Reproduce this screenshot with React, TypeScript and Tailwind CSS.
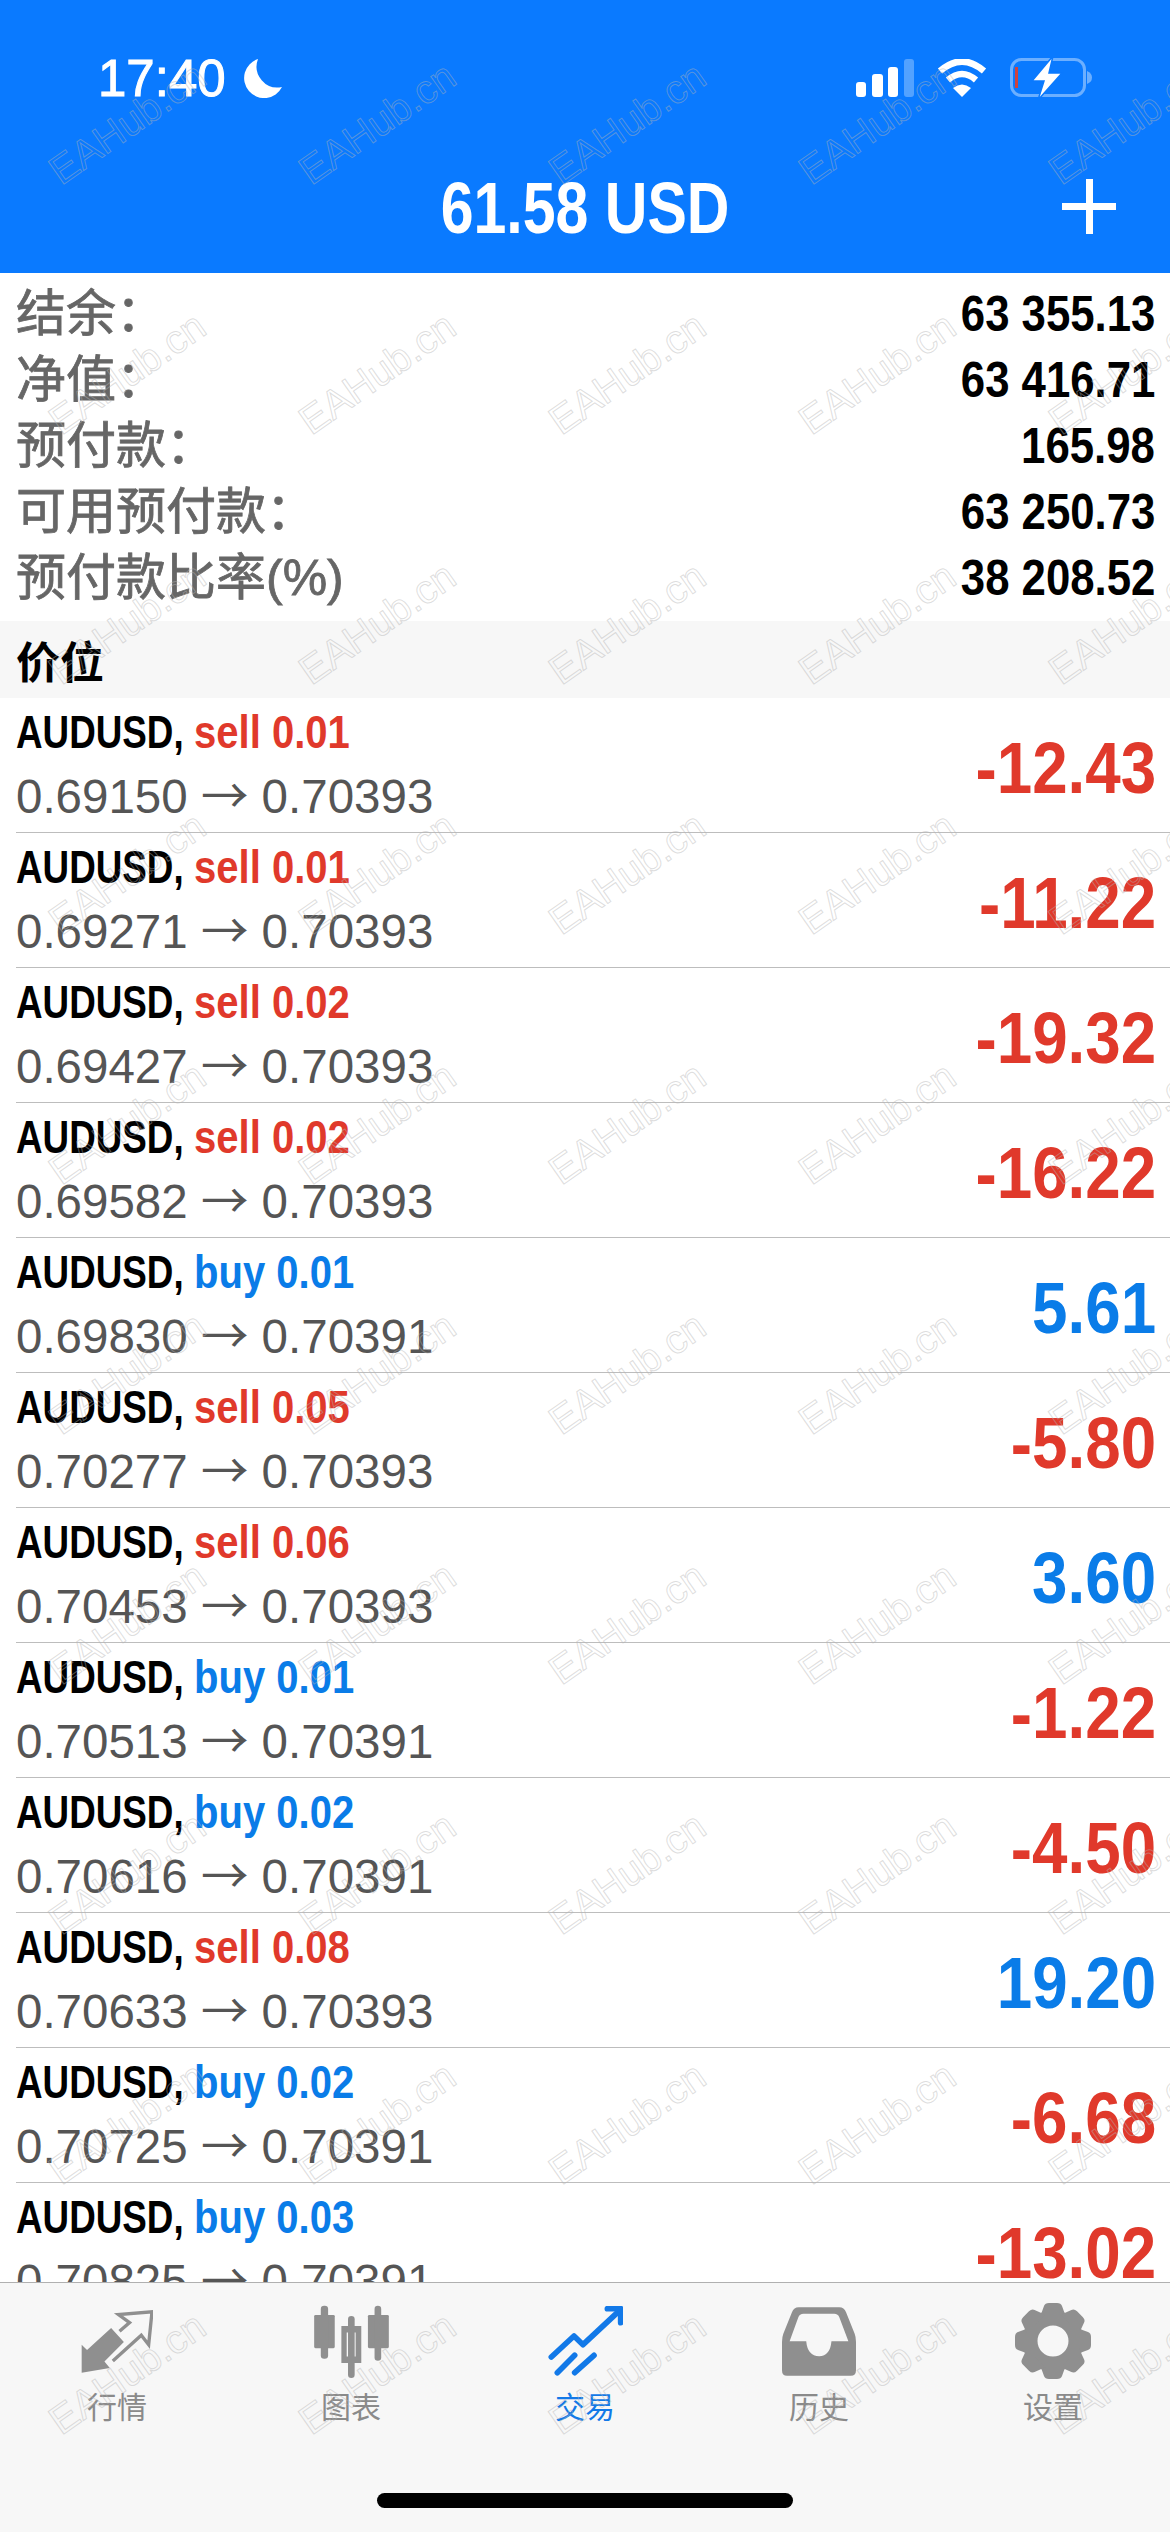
import React from 'react';

const sans = "font-['Liberation_Sans',sans-serif]";
const cjk = "font-['Noto_Sans_CJK_SC','Liberation_Sans',sans-serif]";

const summary = [
  { label: '结余：', value: '63 355.13' },
  { label: '净值：', value: '63 416.71' },
  { label: '预付款：', value: '165.98' },
  { label: '可用预付款：', value: '63 250.73' },
  { label: '预付款比率(%)', value: '38 208.52' },
];

const positions = [
  { side: 'sell', lots: '0.01', open: '0.69150', close: '0.70393', profit: '-12.43' },
  { side: 'sell', lots: '0.01', open: '0.69271', close: '0.70393', profit: '-11.22' },
  { side: 'sell', lots: '0.02', open: '0.69427', close: '0.70393', profit: '-19.32' },
  { side: 'sell', lots: '0.02', open: '0.69582', close: '0.70393', profit: '-16.22' },
  { side: 'buy', lots: '0.01', open: '0.69830', close: '0.70391', profit: '5.61' },
  { side: 'sell', lots: '0.05', open: '0.70277', close: '0.70393', profit: '-5.80' },
  { side: 'sell', lots: '0.06', open: '0.70453', close: '0.70393', profit: '3.60' },
  { side: 'buy', lots: '0.01', open: '0.70513', close: '0.70391', profit: '-1.22' },
  { side: 'buy', lots: '0.02', open: '0.70616', close: '0.70391', profit: '-4.50' },
  { side: 'sell', lots: '0.08', open: '0.70633', close: '0.70393', profit: '19.20' },
  { side: 'buy', lots: '0.02', open: '0.70725', close: '0.70391', profit: '-6.68' },
  { side: 'buy', lots: '0.03', open: '0.70825', close: '0.70391', profit: '-13.02' },
];

function StatusIcons() {
  return (
    <div className="ml-auto flex items-center gap-[23px]">
      <svg width="58" height="38" viewBox="0 0 58 38">
        <rect x="0" y="23" width="10" height="15" rx="3" fill="#fff" />
        <rect x="16" y="15" width="11" height="23" rx="3" fill="#fff" />
        <rect x="32" y="8" width="10" height="30" rx="3" fill="#fff" />
        <rect x="48" y="0" width="10" height="38" rx="3" fill="#fff" fillOpacity="0.3" />
      </svg>
      <svg width="50" height="38" viewBox="0 0 50 38">
        <path d="M25 38L16 29Q25 22 34 29Z" fill="#fff" />
        <path d="M11 21Q25 9 39 21" fill="none" stroke="#fff" strokeWidth="6.5" />
        <path d="M3 12Q25 -7 47 12" fill="none" stroke="#fff" strokeWidth="6.5" />
      </svg>
      <svg className="overflow-visible" width="82" height="40" viewBox="0 0 82 40">
        <rect x="1.5" y="1.5" width="73" height="36" rx="10" fill="none" stroke="#fff" strokeOpacity="0.4" strokeWidth="3" />
        <path d="M77 13Q82 15 82 19.5Q82 24 77 26Z" fill="#fff" fillOpacity="0.4" />
        <rect x="5" y="9" width="3" height="21" fill="#d0433c" />
        <path d="M43 -2L22 23H34L28 42L52 15H39Z" fill="#fff" stroke="#0a7aff" strokeWidth="1.5" />
      </svg>
    </div>
  );
}

function MarketsIcon() {
  return (
    <svg width="72" height="63" viewBox="60 55 215 187" fill="#8f8f8f">
      <path d="M150 108L188 150L130 208L146 228L62 242L62 158L78 174Z" />
      <path d="M155 207L240 130L262 158L272 60L172 68L205 92L175 118" fill="none" stroke="#8f8f8f" strokeWidth="10" />
    </svg>
  );
}

function ChartsIcon() {
  return (
    <svg width="75" height="73" viewBox="760 35 225 220" fill="#8f8f8f">
      <rect x="760" y="65" width="62" height="100" rx="4" />
      <rect x="780" y="37" width="22" height="160" rx="10" />
      <rect x="922" y="65" width="63" height="100" rx="4" />
      <rect x="942" y="37" width="20" height="166" rx="10" />
      <rect x="862" y="68" width="20" height="187" rx="10" />
      <path fillRule="evenodd" d="M842 98H902V210H842ZM858 118V190H885V118Z" />
    </svg>
  );
}

function TradeIcon() {
  return (
    <svg width="75" height="70" viewBox="80 42 225 210" fill="none" stroke="#1279e8" strokeWidth="17" strokeLinecap="round" strokeLinejoin="round">
      <path d="M90 195L158 132L185 158L292 58" />
      <path d="M258 50H298V92" />
      <path d="M108 242L160 190" />
      <path d="M160 242L218 190" />
    </svg>
  );
}

function HistoryIcon() {
  return (
    <svg width="74" height="69" viewBox="785 45 223 207" fill="#8f8f8f">
      <path
        fillRule="evenodd"
        d="M835 45H958Q972 45 978 60L1004 125Q1008 135 1008 150V235Q1008 252 992 252H800Q785 252 785 235V150Q785 135 789 125L815 60Q821 45 835 45ZM850 65Q838 65 834 76L808 148H858Q862 193 897 193Q930 193 934 148H985L958 76Q954 65 942 65Z"
      />
    </svg>
  );
}

function SettingsIcon() {
  return (
    <svg width="76" height="76" viewBox="-38 -38 76 76" fill="#8f8f8f">
      <circle r="23" fill="none" stroke="#8f8f8f" strokeWidth="15" />
      {[0, 45, 90, 135, 180, 225, 270, 315].map((a) => (
        <path key={a} transform={`rotate(${a})`} d="M-13 -24L-9 -35Q-8 -38 -4 -38H4Q8 -38 9 -35L13 -24Z" />
      ))}
    </svg>
  );
}

const tabs = [
  { label: '行情', icon: <MarketsIcon /> },
  { label: '图表', icon: <ChartsIcon /> },
  { label: '交易', icon: <TradeIcon />, active: true },
  { label: '历史', icon: <HistoryIcon /> },
  { label: '设置', icon: <SettingsIcon /> },
];

export default function App() {
  return (
    <div className="relative flex h-[2532px] w-[1170px] flex-col overflow-hidden bg-white">
      {/* Header */}
      <header className="flex h-[273px] shrink-0 flex-col bg-[#0a7aff] text-white">
        <div className="flex h-[156px] items-center pl-[98px] pr-[78px]">
          <span className={`${sans} text-[51px] leading-none [-webkit-text-stroke:1px_white]`}>17:40</span>
          <svg className="ml-[17px]" width="39" height="39" viewBox="0 0 39 39" fill="#fff">
            <path d="M15 0A20 20 0 1 0 39 28A21 21 0 0 1 15 0Z" />
          </svg>
          <StatusIcons />
        </div>
        <div className="grid h-[100px] grid-cols-[1fr_auto_1fr] items-center px-[54px]">
          <div />
          <h1 className={`${sans} mt-[4px] origin-center scale-x-[0.82] text-[72px] font-bold leading-none`}>61.58 USD</h1>
          <div className="relative h-[55px] w-[54px] justify-self-end">
            <div className="absolute left-0 top-[24px] h-[7px] w-[54px] bg-white" />
            <div className="absolute left-[24px] top-0 h-[55px] w-[7px] bg-white" />
          </div>
        </div>
      </header>

      {/* Account summary */}
      <section className="shrink-0 pb-[10px] pt-[8px]">
        {summary.map((row) => (
          <div key={row.label} className="flex h-[66px] items-center justify-between pl-[16px] pr-[15px]">
            <span className="font-['Liberation_Sans','Noto_Sans_CJK_SC',sans-serif] text-[50px] leading-none text-[#666] [-webkit-text-stroke:0.8px_#666]">{row.label}</span>
            <span className={`${sans} origin-right scale-x-[0.875] text-[50px] font-bold leading-none text-black`}>{row.value}</span>
          </div>
        ))}
      </section>

      {/* Positions */}
      <div className="flex h-[77px] shrink-0 items-center bg-[#f7f7f7] pl-[16px]">
        <span className={`${cjk} text-[44px] font-bold leading-none text-black`}>价位</span>
      </div>
      <main className="min-h-0 flex-1 overflow-hidden">
        {positions.map((p, i) => (
          <div key={i} className="ml-[16px] flex h-[135px] items-center justify-between border-b border-[#bdbdbd] pr-[14px]">
            <div>
              <div className={`${sans} whitespace-nowrap text-[46px] font-bold leading-[60px] text-black`}>
                <span className="inline-block w-[178px] origin-left scale-x-[0.8]">AUDUSD,</span>
                <span className={`inline-block origin-left scale-x-[0.87] ${p.side === 'sell' ? 'text-[#e0392b]' : 'text-[#0a7ce8]'}`}>
                  {p.side} {p.lots}
                </span>
              </div>
              <div className={`${sans} text-[47.5px] leading-[62px] text-[#555]`}>
                {p.open} <span className={cjk}>→</span> {p.close}
              </div>
            </div>
            <div className={`${sans} mt-[6px] origin-right scale-x-[0.885] text-[72px] font-bold leading-none ${p.profit.startsWith('-') ? 'text-[#e0392b]' : 'text-[#0a7ce8]'}`}>
              {p.profit}
            </div>
          </div>
        ))}
      </main>

      {/* Tab bar */}
      <nav className="flex h-[250px] shrink-0 flex-col border-t border-[#b0b0b0] bg-[#f7f7f7] pb-[24px] pt-[20px]">
        <div className="grid grid-cols-5">
          {tabs.map((t) => (
            <div key={t.label} className="flex flex-col items-center">
              <div className="flex h-[76px] items-center justify-center">{t.icon}</div>
              <span className={`${cjk} mt-[6px] text-[30px] leading-[40px] ${t.active ? 'text-[#1279e8]' : 'text-[#8a8a8a]'}`}>{t.label}</span>
            </div>
          ))}
        </div>
        <div className="mx-auto mt-auto h-[15px] w-[416px] rounded-full bg-black" />
      </nav>

      {/* Watermark */}
      <div className="pointer-events-none absolute left-[2px] top-[-2px] grid grid-cols-[repeat(5,250px)] auto-rows-[250px]">
        {Array.from({ length: 55 }).map((_, i) => (
          <div key={i} className="flex items-center justify-center">
            <span className={`${sans} -rotate-[35deg] whitespace-nowrap text-[40px] leading-none text-transparent [-webkit-text-stroke:1px_rgba(180,180,180,0.45)]`}>
              EAHub.cn
            </span>
          </div>
        ))}
      </div>
    </div>
  );
}
